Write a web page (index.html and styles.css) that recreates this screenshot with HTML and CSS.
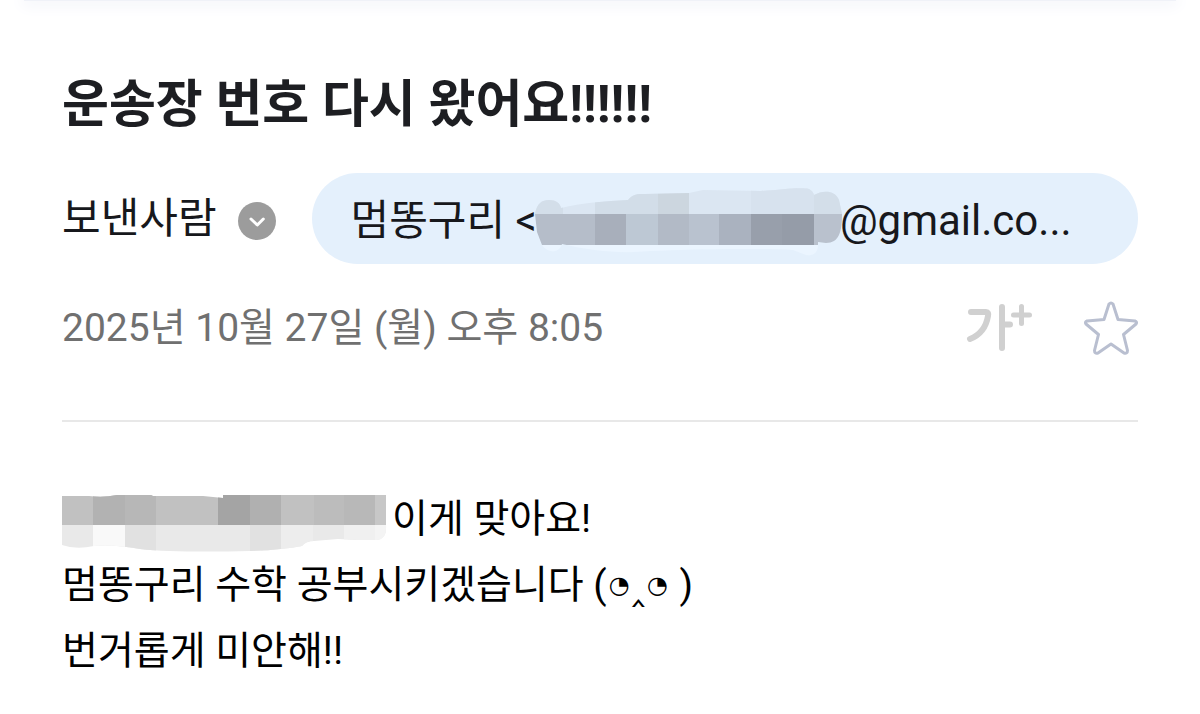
FILE: index.html
```html
<!DOCTYPE html>
<html lang="ko">
<head>
<meta charset="utf-8">
<meta name="viewport" content="width=device-width, initial-scale=1">
<title>운송장 번호 다시 왔어요!!!!!!</title>
<link rel="stylesheet" href="styles.css">
</head>
<body>
<div class="top-edge"></div>
<main class="mail">
  <header class="mail-header">
    <h1 class="subject">운송장 번호 다시 왔어요!!!!!!</h1>
    <div class="sender-row">
      <span class="sender-label">보낸사람</span>
      <button class="toggle" type="button" aria-label="펼치기">
        <svg class="toggle-icon" viewBox="0 0 38 38" aria-hidden="true"><circle cx="19" cy="19" r="19" fill="#9c9c9c"/><path d="M13 17l6.300 6 6-6" fill="none" stroke="#fff" stroke-width="3" stroke-linecap="round" stroke-linejoin="round"/></svg>
      </button>
      <button class="sender-pill" type="button">
        <span>멈똥구리 &lt;</span>
        <svg class="pill-mask" viewBox="534 186 307 70" aria-hidden="true">
          <defs>
            <clipPath id="addr"><path d="M534 214C536 203 541 200 548 200C555 200 559 203 560 208C580 203 605 201 627 200C632 194 636 194 644 194L688 193L702 190L760 191C780 190 798 187 808 189Q812 191 813 195C822 190 834 190 838 200L841 214C841 232 838 243 825 243L817 242V245C817 254 811 256 805 255L792 250C750 248 690 249 650 251C620 254 590 251 561 244C558 255 545 252 541 245L536 232Z"/></clipPath>
          </defs>
          <g clip-path="url(#addr)">
            <path fill="#dbe6f2" d="M534 186h307v28H534z"/>
            <path fill="#d3dee9" d="M534 186h28v28h-28zM813 186h28v28h-28z"/>
            <path fill="#d2dde8" d="M594 186h63v28h-63z"/>
            <path fill="#ccd6df" d="M657 186h31v28h-31z"/>
            <path fill="#d7e2ee" d="M750 186h63v28h-63z"/>
            <path fill="#b5bdc9" d="M534 214h60v31h-60z"/>
            <path fill="#a8afbb" d="M594 214h31v31h-31z"/>
            <path fill="#bdc8d4" d="M625 214h32v31h-32z"/>
            <path fill="#b2bac6" d="M657 214h31v31h-31z"/>
            <path fill="#b9c2cf" d="M688 214h30v31h-30z"/>
            <path fill="#aab2bf" d="M718 214h32v31h-32z"/>
            <path fill="#989fab" d="M750 214h31v31h-31z"/>
            <path fill="#959ca8" d="M781 214h32v31h-32z"/>
            <path fill="#b9c1cd" d="M813 214h28v31h-28z"/>
            <path fill="#ebf5ff" d="M534 245h307v11H534z"/>
          </g>
        </svg>
        <span>@gmail.co...</span>
      </button>
    </div>
    <div class="meta-row">
      <time class="date" datetime="2025-10-27T20:05">2025년 10월 27일 (월) 오후 8:05</time>
      <div class="actions">
        <button class="action" type="button" aria-label="글자 크기">
          <svg class="size-icon" viewBox="965 304 68 50" aria-hidden="true"><g fill="none" stroke="#d0d0d0" stroke-width="6" stroke-linecap="round" stroke-linejoin="round"><path d="M970 313h15q3 0 2 4c-2 12-8 19-18 23M1001 308v41M1001 325.500h8"/><path stroke-width="5" d="M1020.500 307.500v17M1012.500 316h16"/></g></svg>
        </button>
        <button class="action" type="button" aria-label="중요 표시">
          <svg class="star-icon" viewBox="1083 300 54 54" aria-hidden="true"><path d="M1108 303q2-2 4 0l5 15.500 17 1.500q2.500 1 1 3l-12.500 10.500 4 16q0 3.500-3.500 2.500l-13-9-13 9q-3.500 1-3.500-2.500l4-16-12.500-10.500q-1.500-2 1-3l17-1.500z" fill="none" stroke="#b9bfd0" stroke-width="3" stroke-linejoin="round"/></svg>
        </button>
      </div>
    </div>
  </header>
  <section class="message">
    <p class="line"><svg class="number-mask" viewBox="62 494 325 58" aria-hidden="true">
        <defs>
          <clipPath id="num"><path d="M62 496h27q14 2 28-1h34l2 1h50l20 2v-3h163v30q1 14-9 15H358l-20-1-24 2q-8 0-12 5-20 4-52 5c-40 1-84 1-110-2q-27-5-46-3-18 4-32-1z"/></clipPath>
        </defs>
        <g clip-path="url(#num)">
          <path fill="#c1c1c1" d="M62 494h325v31H62z"/>
          <path fill="#b2b2b2" d="M93 494h32v31H93z"/>
          <path fill="#b7b7b7" d="M125 494h31v31h-31z"/>
          <path fill="#a4a4a4" d="M218 494h32v31h-32z"/>
          <path fill="#b0b0b0" d="M250 494h31v31h-31z"/>
          <path fill="#bcbcbc" d="M314 494h30v31h-30z"/>
          <path fill="#b8b8b8" d="M344 494h31v31h-31z"/>
          <path fill="#c7c7c7" d="M375 494h12v31h-12z"/>
          <path fill="#e9e9e9" d="M62 525h325v27H62z"/>
          <path fill="#f9f9f9" d="M93 525h32v27H93z"/>
          <path fill="#e1e1e1" d="M125 525h31v27h-31zM250 525h31v27h-31z"/>
          <path fill="#ededed" d="M281 525h32v27h-32z"/>
          <path fill="#f0f0f0" d="M344 525h31v27h-31z"/>
          <path fill="#f4f4f4" d="M375 525h12v27h-12z"/>
        </g>
      </svg><span>이게 맞아요!</span></p>
    <p class="line"><span>멈똥구리 수학 공부시키겠습니다 (<span class="eye">◔</span>‸<span class="eye">◔</span> )</span></p>
    <p class="line">번거롭게 미안해!!</p>
  </section>
</main>
</body>
</html>
```
FILE: styles.css
```css
* { box-sizing: border-box; }

body {
  margin: 0;
  background: #fff;
  color: #1d1e22;
  font-family: Roboto, "Noto Sans CJK KR", "DejaVu Sans", sans-serif;
}

button {
  padding: 0;
  border: 0;
  background: none;
  color: inherit;
  font: inherit;
  cursor: pointer;
}

svg { display: block; flex: none; }

.top-edge {
  height: 1px;
  margin: 0 24px;
  background: #f0f2f8;
  box-shadow: 0 0 16px 2px #e4e7f2;
}

.mail { padding: 68px 62px 32px; }

.mail-header {
  display: flex;
  flex-direction: column;
  border-bottom: 2px solid #e8e8e8;
  padding-bottom: 64px;
}

.subject {
  margin: 0 0 32px;
  font-size: 51px;
  line-height: 72px;
  font-weight: 700;
}

.sender-row {
  display: flex;
  align-items: center;
  font-size: 42px;
  line-height: 60px;
  color: #17181c;
}

.sender-label { flex: none; }

.toggle { margin: 4px 36px 0 21px; }

.toggle-icon { width: 38px; height: 38px; }

.sender-pill {
  display: flex;
  flex: 1;
  align-items: center;
  min-width: 0;
  overflow: hidden;
  padding: 13px 39px 8px;
  border-radius: 46px;
  background: #e4f0fc;
  white-space: nowrap;
}

.pill-mask {
  width: 307px;
  height: 70px;
  margin: 0 -2px;
}

.meta-row {
  display: flex;
  align-items: center;
  justify-content: space-between;
  margin-top: 36px;
}

.date {
  font-size: 39px;
  line-height: 56px;
  color: #707070;
}

.actions {
  display: flex;
  align-items: center;
  gap: 50px;
}

.size-icon { width: 68px; height: 50px; }

.star-icon { width: 54px; height: 54px; }

.message {
  padding-top: 64px;
  font-size: 39px;
  line-height: 66px;
  color: #000;
}

.line {
  display: flex;
  align-items: center;
  margin: 0;
  white-space: pre;
}

.eye {
  margin: 0 2px;
  font-size: 24px;
  line-height: 24px;
  vertical-align: 5px;
}

.number-mask {
  width: 325px;
  height: 58px;
  margin: 8px 5px 0 0;
}
```
